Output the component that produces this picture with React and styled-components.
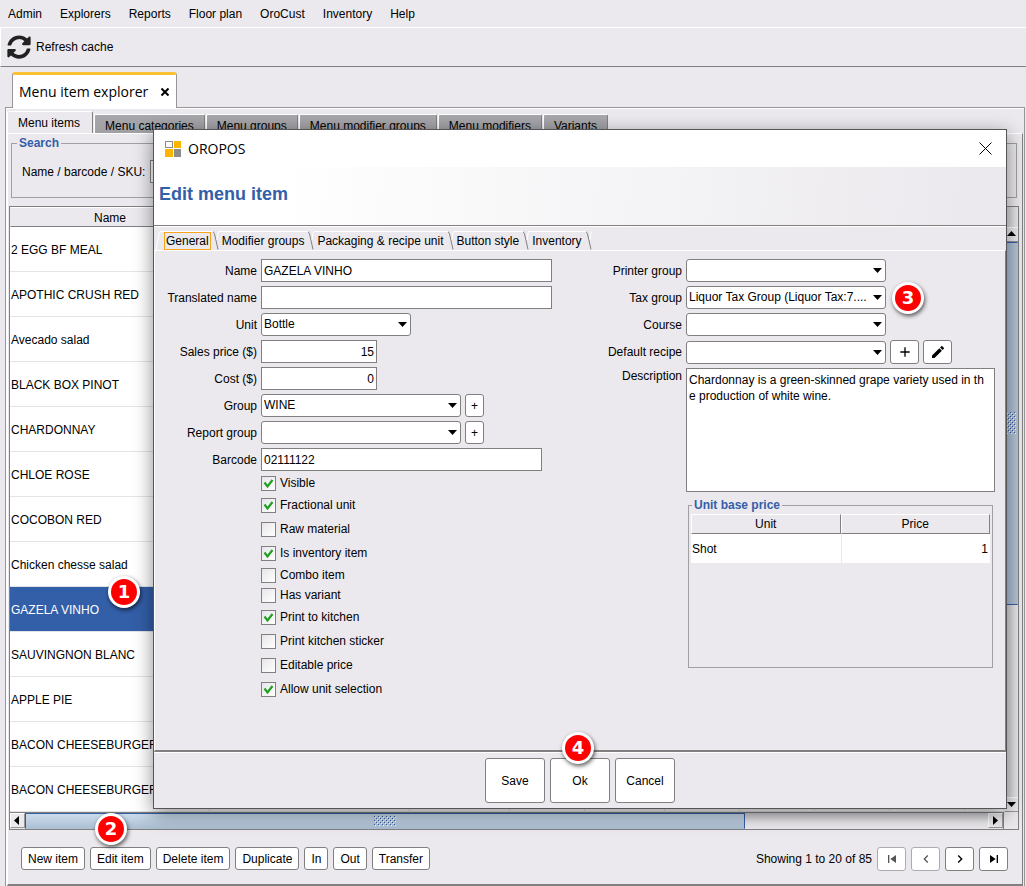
import React, { useState } from "react";
import styled, { createGlobalStyle } from "styled-components";
import { FaSyncAlt } from "react-icons/fa";
import {
  MdAdd,
  MdChevronLeft,
  MdChevronRight,
  MdEdit,
  MdSkipNext,
  MdSkipPrevious,
} from "react-icons/md";

const GlobalStyle = createGlobalStyle`
  * {
    box-sizing: border-box;
  }

  body {
    margin: 0;
    background: #ebe9ed;
    color: #000;
    font-family: "Liberation Sans", Arial, sans-serif;
    font-size: 12px;
    line-height: 16px;
  }

  button,
  input,
  select,
  textarea {
    font: inherit;
    color: inherit;
  }
`;

const Page = styled.div`
  position: relative;
  min-height: 100vh;
  display: flex;
  flex-direction: column;
  padding-bottom: 1px;
  overflow: hidden;
`;

const MenuBar = styled.nav`
  display: flex;
  align-items: center;
  gap: 18px;
  height: 27px;
  padding: 0 8px;
`;

const MenuEntry = styled.button`
  padding: 0;
  border: none;
  background: none;
`;

const Toolbar = styled.div`
  display: flex;
  align-items: center;
  height: 40px;
  padding-left: 6px;
  border-top: 1px solid #fff;
  border-left: 1px solid #fff;
  border-bottom: 1px solid #808080;
`;

const ToolButton = styled.button`
  display: flex;
  align-items: center;
  gap: 5px;
  padding: 0;
  border: none;
  background: none;

  svg {
    color: #222;
  }
`;

const DocumentTabs = styled.div`
  display: flex;
  padding: 5px 12px 0;
`;

const DocumentTab = styled.div`
  position: relative;
  z-index: 1;
  display: flex;
  align-items: center;
  gap: 13px;
  height: 36px;
  margin-bottom: -1px;
  padding: 1px 7px 0 6px;
  border: 1px solid #979797;
  border-top: 3px solid #ffc133;
  border-bottom: none;
  border-radius: 3px 3px 0 0;
  background: #fff;
  font-family: "Open Sans", "Noto Sans", sans-serif;
  font-size: 14px;
`;

const CloseButton = styled.button`
  display: flex;
  padding: 0;
  border: none;
  background: none;
`;

const Workspace = styled.main`
  flex: 1;
  display: flex;
  flex-direction: column;
  margin: 0 1px 0 5px;
  padding: 3px 1px 0 1px;
  border: 1px solid #979797;
  border-bottom: none;
  box-shadow: inset 1px 1px 0 #fff;
`;

const ExplorerTabs = styled.div`
  display: flex;
  align-items: flex-end;
  gap: 1px;
  height: 22px;
`;

const ExplorerTab = styled.button`
  height: ${(props) => (props.$active ? "23px" : "19px")};
  margin-bottom: ${(props) => (props.$active ? "-1px" : "0")};
  padding: ${(props) => (props.$active ? "0 12px 0 10px" : "3px 10px 0")};
  border: 1px solid #fff;
  border-right-color: #808080;
  border-bottom: none;
  border-radius: 2px 2px 0 0;
  background: ${(props) =>
    props.$active ? "#ebe9ed" : "linear-gradient(#a8a7ab, #a09fa3)"};
`;

const ExplorerPanel = styled.div`
  flex: 1;
  display: flex;
  flex-direction: column;
  padding: 1px 3px 0 1px;
  border: 1px solid #fff;
  border-right: 1px solid #808080;
  border-bottom: 2px solid #808080;
`;

const Group = styled.fieldset`
  min-width: 0;
  margin: 0;
  padding: 0;
  border: 1px solid #a0a0a4;
`;

const SearchGroup = styled(Group)`
  margin: 0 2px 8px 2px;
  padding: 9px 10px 14px;
`;

const GroupTitle = styled.legend`
  margin-left: ${(props) => props.$inset};
  padding: 0 2px;
  color: #335ea8;
  font-weight: bold;
  line-height: 16px;
`;

const SearchRow = styled.div`
  display: flex;
  align-items: center;
  gap: 5px;
`;

const TextInput = styled.input`
  width: ${(props) => props.$width};
  height: 23px;
  padding: 0 2px;
  border: 1px solid #808080;
  border-radius: 0;
  background: #fff;
  text-align: ${(props) => (props.$numeric ? "right" : "left")};
`;

const TableFrame = styled.div`
  border: 1px solid #808080;
`;

const TableArea = styled.div`
  display: flex;
  overflow: hidden;
`;

const TableClip = styled.div`
  flex: 1;
  min-width: 0;
  overflow: hidden;
  background: #fff;
`;

const ItemTable = styled.table`
  width: 100%;
  table-layout: fixed;
  border-spacing: 0;

  th {
    height: 20px;
    padding: 1px 0 0;
    border: 1px solid #fff;
    border-left-color: #ebe9ed;
    border-right-color: #808080;
    border-bottom-color: #808080;
    background: #ebe9ed;
    font-weight: normal;
  }

  td {
    position: relative;
    height: 45px;
    padding: 2px 1px 0;
    border-right: 1px solid #e4e3e6;
    border-bottom: 1px solid #e4e3e6;
    white-space: nowrap;
  }
`;

const ItemRow = styled.tr`
  background: ${(props) => (props.$selected ? "#335ea8" : "#fff")};
  color: ${(props) => (props.$selected ? "#fff" : "#000")};
`;

const VerticalScroll = styled.div`
  display: flex;
  flex-direction: column;
  width: 14px;
  padding-top: 20px;
  background: linear-gradient(90deg, #d0cfd3, #ebe9ed);
`;

const HorizontalScroll = styled.div`
  display: flex;
  height: 17px;
  margin-right: 14px;
  border-top: 1px solid #808080;
  border-right: 1px solid #808080;
  background: linear-gradient(#cccbcf, #ebe9ed 60%);
`;

const ScrollButton = styled.button`
  display: flex;
  align-items: center;
  justify-content: center;
  width: 15px;
  height: 15px;
  flex-shrink: 0;
  padding: 0;
  border: 1px solid #fff;
  border-right-color: #979797;
  border-bottom-color: #979797;
  background: #ebe9ed;
`;

const Thumb = styled.div`
  display: flex;
  align-items: center;
  justify-content: center;
  flex: ${(props) => props.$share};
  border: 1px solid #335ea8;
  border-bottom-color: ${(props) => (props.$vertical ? "#335ea8" : "#adc0d4")};
  border-right-color: ${(props) => (props.$vertical ? "#b4c3d5" : "#335ea8")};
  background: ${(props) =>
    props.$vertical
      ? "linear-gradient(90deg, #a9bed6, #b4c3d5)"
      : "linear-gradient(#cbdcec, #adc0d4)"};
`;

const Track = styled.div`
  flex: ${(props) => props.$share};
`;

const Footer = styled.footer`
  display: flex;
  flex: 1;
  align-items: flex-start;
  justify-content: space-between;
  padding: 17px 11px 13px 12px;
`;

const Actions = styled.div`
  display: flex;
  align-items: center;
  gap: 5px;
`;

const ActionSlot = styled.div`
  position: relative;
`;

const Button = styled.button`
  display: flex;
  align-items: center;
  justify-content: center;
  min-width: ${(props) => props.$width || "0"};
  height: ${(props) => props.$height || "23px"};
  padding: ${(props) => (props.$width ? "0" : "0 6px")};
  border: 1px solid #808080;
  border-radius: 3px;
  background: #fff;
  white-space: nowrap;

  &:disabled {
    border-color: #adabb0;
    color: #555;
  }
`;

const Badge = styled.span`
  position: absolute;
  left: ${(props) => props.$left};
  top: ${(props) => props.$top};
  z-index: 2;
  display: flex;
  align-items: center;
  justify-content: center;
  width: 32px;
  height: 32px;
  border: 3px solid #fff;
  border-radius: 50%;
  background: #f00;
  box-shadow: 1px 2px 4px rgba(0, 0, 0, 0.65);
  color: #fff;
  font-family: "DejaVu Sans", Verdana, sans-serif;
  font-size: 18px;
  font-weight: bold;
`;

const Dialog = styled.section`
  position: absolute;
  top: 129px;
  left: 153px;
  right: 19px;
  border: 1px solid #555;
  background: #ebe9ed;
  box-shadow: 0 5px 18px rgba(0, 0, 0, 0.45);
`;

const TitleBar = styled.header`
  display: flex;
  align-items: center;
  justify-content: space-between;
  height: 37px;
  padding: 0 14px 0 11px;
  background: #fff;
`;

const AppName = styled.div`
  display: flex;
  align-items: center;
  gap: 7px;
  font-family: "Open Sans", "Noto Sans", sans-serif;
  font-size: 14px;
`;

const Banner = styled.div`
  height: 59px;
  padding: 15px 5px;
  border-bottom: 1px solid #808080;
  background: linear-gradient(95deg, #fff 15%, #ebe9ed 95%);

  h1 {
    margin: 0;
    color: #335ea8;
    font-size: 18px;
    line-height: 24px;
  }
`;

const DialogTabs = styled.div`
  display: flex;
  align-items: flex-end;
  height: 24px;
  padding-left: 1px;
  border-top: 1px solid #fff;
`;

const DialogTab = styled.button`
  height: 19px;
  padding: ${(props) => (props.$active ? "0 2px 0 3px" : "0 4px 0 3px")};
  border: none;
  border-top: 1px solid #fff;
  background: none;
  white-space: nowrap;
`;

const TabFocus = styled.span`
  display: block;
  height: 18px;
  padding: 0 1px;
  border: 1px solid #f8a51b;
`;

const Form = styled.div`
  display: grid;
  grid-template-columns: minmax(0, 1fr) 389px;
  gap: 12px;
  padding: 8px 10px 49px 8px;
  border: 1px solid #fff;
  border-right-color: #808080;
  border-bottom: 2px solid #808080;
`;

const Fields = styled.div`
  display: grid;
  grid-template-columns: ${(props) => props.$labels} minmax(0, 1fr);
  align-content: start;
  gap: 4px;
`;

const FieldLabel = styled.label`
  align-self: ${(props) => (props.$top ? "start" : "center")};
  text-align: right;
  white-space: nowrap;
`;

const FieldControls = styled.div`
  position: relative;
  display: flex;
  align-items: center;
  gap: 4px;
`;

const SelectBox = styled.div`
  position: relative;
  width: ${(props) => props.$width};

  svg {
    position: absolute;
    right: 4px;
    top: 7px;
    pointer-events: none;
  }
`;

const SelectInput = styled.select`
  display: block;
  width: 100%;
  height: 23px;
  padding: 0 14px 2px 2px;
  border: 1px solid #808080;
  border-radius: 3px;
  background: #fff;
  appearance: none;
`;

const Description = styled.textarea`
  display: block;
  width: 100%;
  height: 124px;
  padding: 3px 8px 3px 2px;
  border: 1px solid #808080;
  border-radius: 0;
  word-break: break-all;
  resize: none;
`;

const CheckList = styled.div`
  grid-column: 2;
  margin-top: -2px;
`;

const CheckRow = styled.label`
  position: relative;
  display: flex;
  align-items: center;
  gap: 4px;
  height: ${(props) => (props.$compact ? "20px" : "24px")};

  svg {
    position: absolute;
    left: 2px;
    visibility: hidden;
  }

  input:checked + svg {
    visibility: visible;
  }
`;

const CheckBox = styled.input`
  width: 15px;
  height: 15px;
  margin: 0;
  border: 1px solid #808080;
  background: linear-gradient(135deg, #e6e5e8, #fff);
  appearance: none;
`;

const PriceGroup = styled(Group)`
  grid-column: 1 / -1;
  margin: 1px 2px 0 82px;
  padding: 1px 2px 104px;
`;

const PriceTable = styled.table`
  width: 100%;
  table-layout: fixed;
  border-spacing: 0;

  th {
    height: 20px;
    padding: 0;
    border: 1px solid #fff;
    border-right-color: #808080;
    border-bottom-color: #808080;
    font-weight: normal;
  }

  td {
    height: 29px;
    padding: 0 2px 0 1px;
    background: #fff;
  }

  td:last-child {
    border-left: 1px solid #ebe9ed;
    text-align: right;
  }
`;

const DialogActions = styled.div`
  display: flex;
  justify-content: center;
  gap: 5px;
  padding: 5px;
  border-top: 1px solid #fff;
`;

const menus = [
  "Admin",
  "Explorers",
  "Reports",
  "Floor plan",
  "OroCust",
  "Inventory",
  "Help",
];

const explorerTabs = [
  "Menu items",
  "Menu categories",
  "Menu groups",
  "Menu modifier groups",
  "Menu modifiers",
  "Variants",
];

const dialogTabs = [
  "General",
  "Modifier groups",
  "Packaging & recipe unit",
  "Button style",
  "Inventory",
];

const items = [
  "2 EGG BF MEAL",
  "APOTHIC CRUSH RED",
  "Avecado salad",
  "BLACK BOX PINOT",
  "CHARDONNAY",
  "CHLOE ROSE",
  "COCOBON RED",
  "Chicken chesse salad",
  "GAZELA VINHO",
  "SAUVINGNON BLANC",
  "APPLE PIE",
  "BACON CHEESEBURGER",
  "BACON CHEESEBURGER",
];

const columnWidths = [200, 200, 100, 75, 80, 75, 75, 75, 75];

const options = [
  { id: "visible", label: "Visible", checked: true, compact: true },
  { id: "fractional", label: "Fractional unit", checked: true },
  { id: "raw", label: "Raw material" },
  { id: "inventory", label: "Is inventory item", checked: true },
  { id: "combo", label: "Combo item", compact: true },
  { id: "variant", label: "Has variant", compact: true },
  { id: "kitchen", label: "Print to kitchen", checked: true },
  { id: "sticker", label: "Print kitchen sticker" },
  { id: "editable", label: "Editable price" },
  { id: "unitSelection", label: "Allow unit selection", checked: true },
];

const arrowPaths = {
  up: "M0 6 L4.5 1 L9 6 Z",
  down: "M0 2 H9 L4.5 7 Z",
  left: "M6 0 L1 4.5 L6 9 Z",
  right: "M2 0 L7 4.5 L2 9 Z",
};

const Arrow = ({ direction }) => (
  <svg width="9" height="9" viewBox="0 0 9 9" aria-hidden="true">
    <path d={arrowPaths[direction]} />
  </svg>
);

const Cross = ({ size, weight = 1 }) => (
  <svg
    width={size}
    height={size}
    viewBox={`0 0 ${size} ${size}`}
    stroke="#000"
    strokeWidth={weight}
    aria-hidden="true"
  >
    <path d={`M.5 .5 L${size - 0.5} ${size - 0.5} M${size - 0.5} .5 L.5 ${size - 0.5}`} />
  </svg>
);

const Grip = ({ vertical }) => {
  const width = vertical ? 10 : 22;
  const height = vertical ? 22 : 10;
  const dots = [];
  for (let y = 0; y < height; y += 2) {
    for (let x = y % 4 ? 2 : 0; x < width; x += 4) {
      dots.push(<rect key={`${x}-${y}`} x={x} y={y} width="1" height="1" />);
      dots.push(
        <rect key={`${x}-${y}-l`} x={x + 1} y={y + 1} width="1" height="1" fill="#fff" />
      );
    }
  }
  return (
    <svg width={width} height={height} fill="#335ea8" aria-hidden="true">
      {dots}
    </svg>
  );
};

const Logo = () => (
  <svg width="16" height="16" viewBox="0 0 16 16" aria-hidden="true">
    <rect width="8" height="7" fill="#8c8c8c" />
    <rect x="1" y="1" width="6" height="5" fill="#fff" />
    <rect x="9" width="7" height="7" fill="#ffb400" />
    <rect y="8" width="8" height="8" fill="#ffb400" />
    <rect x="9" y="8" width="7" height="8" fill="#8c8c8c" />
  </svg>
);

const TabEdge = ({ first }) => (
  <svg width="6" height="19" viewBox="0 0 6 19" fill="none" aria-hidden="true">
    {first ? (
      <path d="M0 18.5 H1 L4 3 Q4.500 .5 6 .5" stroke="#fff" />
    ) : (
      <>
        <path d="M0 .5 Q1.500 2 2 5 L5 18.500" stroke="#808080" />
        <path d="M4 9 L5 2 Q5.300 .5 6 .5" stroke="#fff" />
      </>
    )}
  </svg>
);

const Select = ({ id, value = "", width }) => (
  <SelectBox $width={width}>
    <SelectInput id={id} defaultValue={value}>
      <option value={value}>{value}</option>
    </SelectInput>
    <Arrow direction="down" />
  </SelectBox>
);

const ItemExplorer = () => {
  const [selected, setSelected] = useState(8);

  return (
    <Workspace>
      <ExplorerTabs>
        {explorerTabs.map((tab, index) => (
          <ExplorerTab key={tab} $active={index === 0}>
            {tab}
          </ExplorerTab>
        ))}
      </ExplorerTabs>
      <ExplorerPanel>
        <SearchGroup>
          <GroupTitle $inset="-5px">Search</GroupTitle>
          <SearchRow>
            <label htmlFor="search">Name / barcode / SKU:</label>
            <TextInput id="search" $width="200px" />
          </SearchRow>
        </SearchGroup>

        <TableFrame>
          <TableArea>
            <TableClip>
              <ItemTable>
                <colgroup>
                  {columnWidths.map((width, index) => (
                    <col key={index} width={width} />
                  ))}
                  <col />
                </colgroup>
                <thead>
                  <tr>
                    <th>Name</th>
                    {columnWidths.map((width, index) => (
                      <th key={index} />
                    ))}
                  </tr>
                </thead>
                <tbody>
                  {items.map((item, row) => (
                    <ItemRow
                      key={row}
                      $selected={selected === row}
                      onClick={() => setSelected(row)}
                    >
                      <td>
                        {item}
                        {row === 8 && (
                          <Badge $left="98px" $top="-11px">
                            1
                          </Badge>
                        )}
                      </td>
                      {columnWidths.map((width, index) => (
                        <td key={index} />
                      ))}
                    </ItemRow>
                  ))}
                </tbody>
              </ItemTable>
            </TableClip>
            <VerticalScroll>
              <ScrollButton aria-label="Scroll up">
                <Arrow direction="up" />
              </ScrollButton>
              <Thumb $vertical $share={362}>
                <Grip vertical />
              </Thumb>
              <Track $share={193} />
              <ScrollButton aria-label="Scroll down">
                <Arrow direction="down" />
              </ScrollButton>
            </VerticalScroll>
          </TableArea>
          <HorizontalScroll>
            <ScrollButton aria-label="Scroll left">
              <Arrow direction="left" />
            </ScrollButton>
            <Thumb $share={720}>
              <Grip />
            </Thumb>
            <Track $share={244} />
            <ScrollButton aria-label="Scroll right">
              <Arrow direction="right" />
            </ScrollButton>
          </HorizontalScroll>
        </TableFrame>

        <Footer>
          <Actions>
            <Button>New item</Button>
            <ActionSlot>
              <Button>Edit item</Button>
              <Badge $left="5px" $top="-34px">
                2
              </Badge>
            </ActionSlot>
            <Button>Delete item</Button>
            <Button>Duplicate</Button>
            <Button>In</Button>
            <Button>Out</Button>
            <Button>Transfer</Button>
          </Actions>
          <Actions>
            <span>Showing 1 to 20 of 85</span>
            <Button $width="29px" $height="24px" disabled aria-label="First page">
              <MdSkipPrevious size={16} />
            </Button>
            <Button $width="29px" $height="24px" disabled aria-label="Previous page">
              <MdChevronLeft size={16} />
            </Button>
            <Button $width="29px" $height="24px" aria-label="Next page">
              <MdChevronRight size={16} />
            </Button>
            <Button $width="29px" $height="24px" aria-label="Last page">
              <MdSkipNext size={16} />
            </Button>
          </Actions>
        </Footer>
      </ExplorerPanel>
    </Workspace>
  );
};

const EditDialog = () => (
  <Dialog role="dialog" aria-labelledby="dialog-title">
    <TitleBar>
      <AppName>
        <Logo />
        OROPOS
      </AppName>
      <CloseButton aria-label="Close">
        <Cross size={13} />
      </CloseButton>
    </TitleBar>
    <Banner>
      <h1 id="dialog-title">Edit menu item</h1>
    </Banner>

    <DialogTabs>
      <TabEdge first />
      {dialogTabs.map((tab, index) => (
        <React.Fragment key={tab}>
          <DialogTab $active={index === 0}>
            {index === 0 ? <TabFocus>{tab}</TabFocus> : tab}
          </DialogTab>
          <TabEdge />
        </React.Fragment>
      ))}
    </DialogTabs>

    <Form>
      <Fields $labels="94px">
        <FieldLabel htmlFor="name">Name</FieldLabel>
        <TextInput id="name" $width="291px" defaultValue="GAZELA VINHO" />

        <FieldLabel htmlFor="translated">Translated name</FieldLabel>
        <TextInput id="translated" $width="291px" />

        <FieldLabel htmlFor="unit">Unit</FieldLabel>
        <Select id="unit" value="Bottle" width="150px" />

        <FieldLabel htmlFor="sales">Sales price ($)</FieldLabel>
        <TextInput id="sales" $width="116px" $numeric defaultValue="15" />

        <FieldLabel htmlFor="cost">Cost ($)</FieldLabel>
        <TextInput id="cost" $width="116px" $numeric defaultValue="0" />

        <FieldLabel htmlFor="group">Group</FieldLabel>
        <FieldControls>
          <Select id="group" value="WINE" width="200px" />
          <Button $width="19px" aria-label="Add group">
            +
          </Button>
        </FieldControls>

        <FieldLabel htmlFor="report">Report group</FieldLabel>
        <FieldControls>
          <Select id="report" width="200px" />
          <Button $width="19px" aria-label="Add report group">
            +
          </Button>
        </FieldControls>

        <FieldLabel htmlFor="barcode">Barcode</FieldLabel>
        <TextInput id="barcode" $width="281px" defaultValue="02111122" />

        <CheckList>
          {options.map((option) => (
            <CheckRow key={option.id} $compact={option.compact}>
              <CheckBox type="checkbox" defaultChecked={option.checked} />
              <svg width="11" height="11" viewBox="0 0 11 11" fill="none" aria-hidden="true">
                <path d="M1.500 4.500 L4.500 8.500 L9.500 2" stroke="#21a121" strokeWidth="2.200" />
              </svg>
              {option.label}
            </CheckRow>
          ))}
        </CheckList>
      </Fields>

      <Fields $labels="76px">
        <FieldLabel htmlFor="printer">Printer group</FieldLabel>
        <Select id="printer" width="200px" />

        <FieldLabel htmlFor="tax">Tax group</FieldLabel>
        <FieldControls>
          <Select id="tax" value="Liquor Tax Group (Liquor Tax:7...." width="200px" />
          <Badge $left="206px" $top="-4px">
            3
          </Badge>
        </FieldControls>

        <FieldLabel htmlFor="course">Course</FieldLabel>
        <Select id="course" width="200px" />

        <FieldLabel htmlFor="recipe">Default recipe</FieldLabel>
        <FieldControls>
          <Select id="recipe" width="200px" />
          <Button $width="29px" $height="24px" aria-label="Add recipe">
            <MdAdd size={16} />
          </Button>
          <Button $width="29px" $height="24px" aria-label="Edit recipe">
            <MdEdit size={16} />
          </Button>
        </FieldControls>

        <FieldLabel htmlFor="description" $top>
          Description
        </FieldLabel>
        <Description
          id="description"
          defaultValue="Chardonnay is a green-skinned grape variety used in the production of white wine."
        />

        <PriceGroup>
          <GroupTitle $inset="1px">Unit base price</GroupTitle>
          <PriceTable>
            <thead>
              <tr>
                <th>Unit</th>
                <th>Price</th>
              </tr>
            </thead>
            <tbody>
              <tr>
                <td>Shot</td>
                <td>1</td>
              </tr>
            </tbody>
          </PriceTable>
        </PriceGroup>
      </Fields>
    </Form>

    <DialogActions>
      <Button $width="60px" $height="45px">
        Save
      </Button>
      <ActionSlot>
        <Button $width="60px" $height="45px">
          Ok
        </Button>
        <Badge $left="12px" $top="-26px">
          4
        </Badge>
      </ActionSlot>
      <Button $width="60px" $height="45px">
        Cancel
      </Button>
    </DialogActions>
  </Dialog>
);

const App = () => (
  <>
    <GlobalStyle />
    <Page>
      <MenuBar>
        {menus.map((menu) => (
          <MenuEntry key={menu}>{menu}</MenuEntry>
        ))}
      </MenuBar>
      <Toolbar>
        <ToolButton>
          <FaSyncAlt size={24} />
          Refresh cache
        </ToolButton>
      </Toolbar>
      <DocumentTabs>
        <DocumentTab>
          Menu item explorer
          <CloseButton aria-label="Close tab">
            <Cross size={8} weight={2} />
          </CloseButton>
        </DocumentTab>
      </DocumentTabs>
      <ItemExplorer />
      <EditDialog />
    </Page>
  </>
);

export default App;
